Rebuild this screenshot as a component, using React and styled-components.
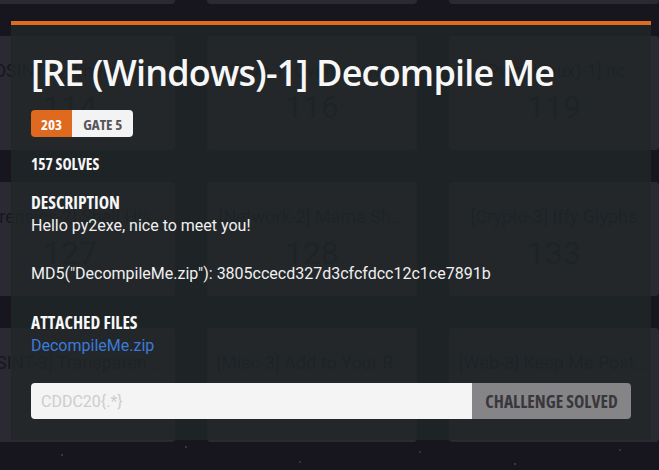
import React from "react";
import styled, { createGlobalStyle } from "styled-components";

const Global = createGlobalStyle`
  html, body { margin: 0; padding: 0; background: #17161f; }
  body { font-family: Roboto, "Noto Sans", sans-serif; }
  * { box-sizing: border-box; }
`;

const COND = `"Open Sans", Roboto, sans-serif`;

const Page = styled.div`
  position: relative;
  width: 659px;
  height: 470px;
  overflow: hidden;
  background-color: #17161f;
  background-image:
    radial-gradient(circle at 62px 455px, rgba(90, 90, 110, 0.5) 0 1px, transparent 1.5px),
    radial-gradient(circle at 186px 447px, rgba(90, 90, 110, 0.5) 0 1px, transparent 1.5px),
    radial-gradient(circle at 300px 462px, rgba(90, 90, 110, 0.4) 0 1px, transparent 1.5px),
    radial-gradient(circle at 515px 464px, rgba(90, 90, 110, 0.5) 0 1px, transparent 1.5px),
    radial-gradient(circle at 620px 450px, rgba(90, 90, 110, 0.4) 0 1px, transparent 1.5px),
    radial-gradient(circle at 420px 452px, rgba(90, 90, 110, 0.4) 0 1px, transparent 1.5px);
`;

const CardGrid = styled.div`
  display: grid;
  grid-template-columns: repeat(3, 210px);
  grid-auto-rows: 114px;
  gap: 32px;
  margin: -110px 0 0 -35px;
`;

const Card = styled.div`
  background: #2b2a33;
  border-radius: 4px;
  display: flex;
  flex-direction: column;
  align-items: center;
  color: #17161d;
  overflow: hidden;
`;

const CardTitle = styled.div`
  margin-top: 23px;
  font-size: 18px;
  line-height: 24px;
  white-space: nowrap;
`;

const CardPoints = styled.div`
  margin-top: 5px;
  font-size: 32px;
  line-height: 38px;
`;

const Modal = styled.div`
  position: absolute;
  top: 21px;
  left: 11px;
  width: 640px;
  background: rgba(32, 39, 40, 0.77);
  border-top: 4px solid #e06a1e;
  padding: 0 20px 21px;
  display: flex;
  flex-direction: column;
  color: #f2f2f2;
`;

const Title = styled.h1`
  margin: 25px 0 0;
  font-family: ${COND};
  font-weight: 600;
  font-size: 36px;
  letter-spacing: -0.8px;
  line-height: 46px;
  white-space: nowrap;
  color: #f7f7f8;
`;

const BadgeRow = styled.div`
  margin-top: 14px;
  display: flex;
  height: 27px;
`;

const Badge = styled.span`
  display: flex;
  align-items: center;
  padding: 0 ${(p) => (p.$accent ? "10px" : "11px")};
  font-family: ${COND};
  font-stretch: 75%;
  font-weight: 700;
  font-size: 15px;
  background: ${(p) => (p.$accent ? "#de691f" : "#f3f3f3")};
  color: ${(p) => (p.$accent ? "#ffffff" : "#555558")};
  border-radius: ${(p) => (p.$accent ? "4px 0 0 4px" : "0 4px 4px 0")};
`;

const Label = styled.div`
  margin-top: ${(p) => p.$mt || 0}px;
  font-family: ${COND};
  font-stretch: 75%;
  font-weight: 700;
  font-size: ${(p) => p.$size || 17.5}px;
  line-height: ${(p) => p.$lh || 24}px;
  text-transform: uppercase;
  color: #f7f7f8;
`;

const Body = styled.div`
  font-size: 16px;
  line-height: 24px;
  color: #f0f0f0;
  white-space: pre-line;
`;

const FileLink = styled.a`
  font-size: 16px;
  line-height: 24px;
  color: #3b7bd8;
  text-decoration: none;
  align-self: flex-start;
`;

const Form = styled.div`
  margin-top: 25px;
  display: flex;
  height: 36px;
`;

const FlagInput = styled.input`
  flex: 1;
  min-width: 0;
  border: none;
  outline: none;
  background: #f4f4f4;
  border-radius: 4px 0 0 4px;
  padding: 0 10px;
  font-family: Roboto, sans-serif;
  font-size: 16px;
  color: #333;
  &::placeholder { color: #cdcdcd; }
`;

const SubmitButton = styled.button`
  width: 159px;
  border: none;
  background: #858487;
  border-radius: 0 4px 4px 0;
  font-family: ${COND};
  font-stretch: 75%;
  font-weight: 700;
  font-size: 17.5px;
  white-space: nowrap;
  color: #38383b;
  padding: 0;
`;

const cards = [
  ["[OSINT-0] Old One", "100"], ["[Misc-0] Warm Up", "101"], ["[Web-0] Start", "102"],
  ["[OSINT-1] Where Is...", "114"], ["[Pwn-1] Overflow Me", "116"], ["[Pwn (Linux)-1] nc", "119"],
  ["[Forensics-2] Shell His...", "127"], ["[Network-2] Mama Sh...", "128"], ["[Crypto-3] Iffy Glyphs", "133"],
  ["[OSINT-3] Transparen...", "140"], ["[Misc-3] Add to Your R...", "141"], ["[Web-3] Keep Me Post...", "145"],
];

export default function App() {
  return (
    <Page>
      <Global />
      <CardGrid>
        {cards.map(([t, p], i) => (
          <Card key={i}>
            <CardTitle>{t}</CardTitle>
            <CardPoints>{p}</CardPoints>
          </Card>
        ))}
      </CardGrid>
      <Modal>
        <Title>[RE (Windows)-1] Decompile Me</Title>
        <BadgeRow>
          <Badge $accent>203</Badge>
          <Badge>GATE 5</Badge>
        </BadgeRow>
        <Label $mt={17} $size={15.5} $lh={20}>157 Solves</Label>
        <Label $mt={16}>Description</Label>
        <Body>{'Hello py2exe, nice to meet you!\n\nMD5("DecompileMe.zip"): 3805ccecd327d3cfcfdcc12c1ce7891b'}</Body>
        <Label $mt={24}>Attached Files</Label>
        <FileLink href="#">DecompileMe.zip</FileLink>
        <Form>
          <FlagInput placeholder="CDDC20{.*}" />
          <SubmitButton>CHALLENGE SOLVED</SubmitButton>
        </Form>
      </Modal>
    </Page>
  );
}
